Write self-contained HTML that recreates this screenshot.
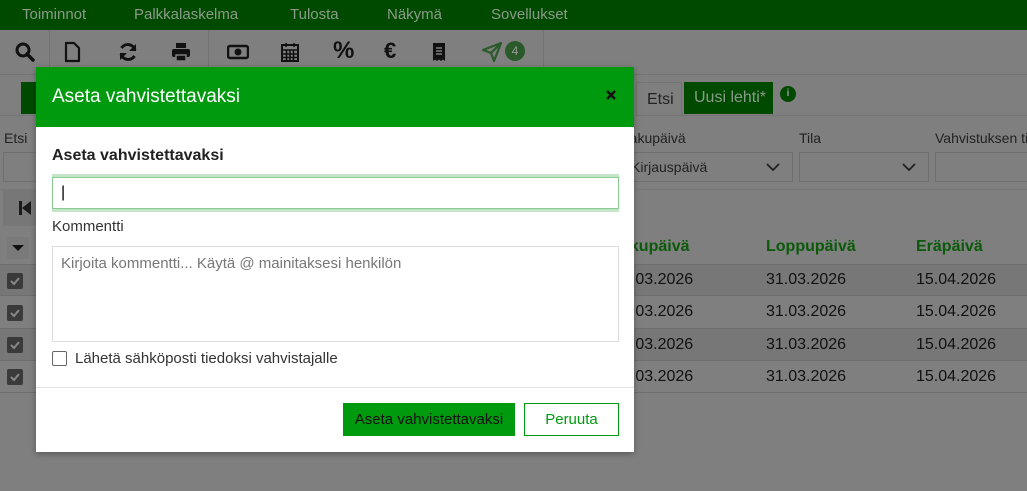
<!DOCTYPE html><html><head><style>
*{box-sizing:border-box;margin:0;padding:0}
body{width:1027px;height:491px;overflow:hidden;background:#7f7f7f;font-family:"Liberation Sans",sans-serif;position:relative;font-size:15px}
.a{position:absolute;white-space:nowrap}
.nav{left:0;top:0;width:1027px;height:30px;background:#004a00;color:#8a9a8a;font-size:15px}
.nav span{position:absolute;top:6px}
.tb{top:30px;left:0;width:1027px;height:45px;border-bottom:1px solid #737373}
svg.ic{position:absolute;top:41px;width:22px;height:22px}
.sep{position:absolute;top:30px;width:1px;height:45px;background:#737373}
.hd{color:#0a5a0a;font-weight:bold;font-size:16px;top:238px}
.row{left:0;width:1027px;height:32px;border-bottom:1px solid #6e6e6e}
.dt{font-size:16px;color:#111}
.cb{position:absolute;left:7px;width:16px;height:16px;background:#3a3a3a;border-radius:2px}
.sel{height:30px;border:1px solid #6f6f6f;top:152px}
</style></head><body>
<div class="a nav"><span style="left:22px">Toiminnot</span><span style="left:134px">Palkkalaskelma</span><span style="left:290px">Tulosta</span><span style="left:387px">Näkymä</span><span style="left:491px">Sovellukset</span></div>
<div class="a tb"></div>
<div class="sep" style="left:49px"></div><div class="sep" style="left:208px"></div><div class="sep" style="left:543px"></div>
<svg class="ic" style="left:14px" viewBox="0 0 22 22"><circle cx="9" cy="9" r="6" fill="none" stroke="#111" stroke-width="3"/><path d="M13 13l6 6" stroke="#111" stroke-width="3.5" stroke-linecap="round"/></svg>
<svg class="ic" style="left:61px" viewBox="0 0 22 22"><path d="M5 2h8l5 5v13H5z" fill="none" stroke="#111" stroke-width="2.2" stroke-linejoin="round"/></svg>
<svg class="ic" style="left:117px" viewBox="0 0 22 22"><path d="M18 9A7.5 7.5 0 0 0 4.5 7M4 13a7.5 7.5 0 0 0 13.5 2" fill="none" stroke="#111" stroke-width="3"/><path d="M19 3v7h-7zM3 19v-7h7z" fill="#111"/></svg>
<svg class="ic" style="left:170px" viewBox="0 0 22 22"><path d="M6 2h10v5H6z" fill="#111"/><rect x="2" y="8" width="18" height="8" rx="2" fill="#111"/><path d="M6 14h10v6H6z" fill="#111" stroke="#7f7f7f" stroke-width="1.5"/></svg>
<svg class="ic" style="left:227px" viewBox="0 0 22 22"><rect x="1" y="5" width="20" height="12" rx="2" fill="none" stroke="#111" stroke-width="2.5"/><circle cx="11" cy="11" r="3.5" fill="#111"/></svg>
<svg class="ic" style="left:279px" viewBox="0 0 22 22"><rect x="3" y="4" width="16" height="16" fill="none" stroke="#111" stroke-width="2"/><path d="M3 9h16M7 2v4M15 2v4M3 13h16M3 16.5h16M7.5 9v11M11 9v11M14.5 9v11" stroke="#111" stroke-width="1.6"/></svg>
<div class="a" style="left:333px;top:37px;font-size:24px;font-weight:bold;color:#111">%</div>
<div class="a" style="left:384px;top:38px;font-size:22px;font-weight:bold;color:#111">€</div>
<svg class="ic" style="left:428px" viewBox="0 0 22 22"><path d="M5 2h12v18l-2-1.5-2 1.5-2-1.5-2 1.5-2-1.5-2 1.5z" fill="#111"/><path d="M8 7h6M8 10h6M8 13h6" stroke="#7f7f7f" stroke-width="1.6"/></svg>
<svg class="ic" style="left:481px" viewBox="0 0 22 22"><path d="M20 2L2 9l8 3 3 8z M10 12L20 2" fill="none" stroke="#2a5a2a" stroke-width="2.2" stroke-linejoin="round"/></svg>
<div class="a" style="left:505px;top:41px;width:20px;height:20px;border-radius:10px;background:#2a5a2a;color:#9a9a9a;font-size:12px;text-align:center;line-height:20px">4</div>
<div class="a" style="left:21px;top:82px;width:30px;height:32px;background:#004a00"></div>
<div class="a" style="left:636px;top:82px;width:46px;height:33px;border:1px solid #737373;border-bottom:none;font-size:16px;color:#222;padding:8px 0 0 10px">Etsi</div>
<div class="a" style="left:684px;top:82px;width:89px;height:32px;background:#004a00;color:#8a9a8a;font-size:16px;padding:7px 0 0 10px">Uusi lehti*</div>
<div class="a" style="left:780px;top:86px;width:16px;height:16px;border-radius:8px;background:#004a00;color:#9a9a9a;font-size:10px;text-align:center;line-height:16px;font-weight:bold">i</div>
<div class="a" style="left:0;top:115px;width:1027px;height:1px;background:#737373"></div>
<div class="a" style="left:4px;top:130px;font-size:14px;color:#222">Etsi</div>
<div class="a" style="left:618px;top:130px;font-size:14px;color:#222">makupäivä</div>
<div class="a" style="left:799px;top:130px;font-size:14px;color:#222">Tila</div>
<div class="a" style="left:935px;top:130px;font-size:14px;color:#222">Vahvistuksen tila</div>
<div class="a sel" style="left:3px;width:40px"></div>
<div class="a sel" style="left:620px;width:173px;font-size:14px;color:#222;padding:6px 0 0 10px">Kirjauspäivä<svg style="position:absolute;right:12px;top:10px" width="14" height="9"><path d="M1 1l6 6 6-6" fill="none" stroke="#222" stroke-width="1.8"/></svg></div>
<div class="a sel" style="left:799px;width:130px"><svg style="position:absolute;right:12px;top:10px" width="14" height="9"><path d="M1 1l6 6 6-6" fill="none" stroke="#222" stroke-width="1.8"/></svg></div>
<div class="a sel" style="left:935px;width:100px"></div>
<div class="a" style="left:0;top:189px;width:1027px;height:1px;background:#777"></div>
<div class="a" style="left:3px;top:190px;width:35px;height:36px;background:#777"><svg style="position:absolute;left:15px;top:11px" width="14" height="14"><path d="M1 0h3v14H1zM13 0v14L4 7z" fill="#1a1a1a"/></svg></div>
<div class="a" style="left:7px;top:237px;width:22px;height:22px;background:#7a7a7a"><svg style="position:absolute;left:5px;top:8px" width="12" height="7"><path d="M0 0h12L6 6z" fill="#111"/></svg></div>
<div class="a hd" style="left:621px">akupäivä</div><div class="a hd" style="left:766px">Loppupäivä</div><div class="a hd" style="left:916px">Eräpäivä</div>
<div class="a row" style="top:264px;background:#777;border-top:1px solid #6e6e6e"></div>
<div class="a row" style="top:297px"></div>
<div class="a row" style="top:329px;background:#777"></div>
<div class="a row" style="top:361px"></div>
<svg class="cb" style="top:273px" viewBox="0 0 16 16"><path d="M4 8l3 3 5-6" fill="none" stroke="#888" stroke-width="2"/></svg>
<svg class="cb" style="top:305px" viewBox="0 0 16 16"><path d="M4 8l3 3 5-6" fill="none" stroke="#888" stroke-width="2"/></svg>
<svg class="cb" style="top:337px" viewBox="0 0 16 16"><path d="M4 8l3 3 5-6" fill="none" stroke="#888" stroke-width="2"/></svg>
<svg class="cb" style="top:369px" viewBox="0 0 16 16"><path d="M4 8l3 3 5-6" fill="none" stroke="#888" stroke-width="2"/></svg>
<div class="a dt" style="left:622px;top:271px">1.03.2026</div><div class="a dt" style="left:766px;top:271px">31.03.2026</div><div class="a dt" style="left:916px;top:271px">15.04.2026</div>
<div class="a dt" style="left:622px;top:303px">1.03.2026</div><div class="a dt" style="left:766px;top:303px">31.03.2026</div><div class="a dt" style="left:916px;top:303px">15.04.2026</div>
<div class="a dt" style="left:622px;top:336px">1.03.2026</div><div class="a dt" style="left:766px;top:336px">31.03.2026</div><div class="a dt" style="left:916px;top:336px">15.04.2026</div>
<div class="a dt" style="left:622px;top:368px">1.03.2026</div><div class="a dt" style="left:766px;top:368px">31.03.2026</div><div class="a dt" style="left:916px;top:368px">15.04.2026</div>

<div class="a" style="left:36px;top:67px;width:598px;height:385px;background:#fff;box-shadow:0 2px 6px rgba(0,0,0,.3)">
 <div class="a" style="left:0;top:0;width:598px;height:60px;background:#009a0e;color:#fff;font-size:19px;padding:19px 0 0 16px">Aseta vahvistettavaksi<svg style="position:absolute;right:18px;top:23px" width="10" height="10"><path d="M1 1l8 8M9 1l-8 8" stroke="#111" stroke-width="2.5"/></svg></div>
 <div class="a" style="left:16px;top:80px;font-weight:bold;font-size:16px;color:#222">Aseta vahvistettavaksi</div>
 <div class="a" style="left:16px;top:107px;width:567px;height:38px;background:#c3e6c8;padding:3px 0"><div style="height:32px;background:#fff;border:1px solid #88cc90;padding:6px 0 0 8px;font-size:16px">|</div></div>
 <div class="a" style="left:16px;top:151px;font-size:15px;color:#333">Kommentti</div>
 <div class="a" style="left:16px;top:179px;width:567px;height:96px;border:1px solid #ddd;padding:8px 0 0 8px;color:#777;font-size:15px">Kirjoita kommentti... Käytä @ mainitaksesi henkilön</div>
 <div class="a" style="left:16px;top:284px;width:15px;height:15px;border:1px solid #666;border-radius:2px"></div>
 <div class="a" style="left:39px;top:283px;font-size:15px;color:#333">Lähetä sähköposti tiedoksi vahvistajalle</div>
 <div class="a" style="left:0;top:320px;width:598px;height:1px;background:#e2e2e2"></div>
 <div class="a" style="left:307px;top:336px;width:172px;height:33px;background:#009a0e;color:#111;font-size:15px;text-align:center;line-height:33px">Aseta vahvistettavaksi</div>
 <div class="a" style="left:488px;top:336px;width:95px;height:33px;border:1px solid #009a0e;color:#009a0e;font-size:15px;text-align:center;line-height:31px">Peruuta</div>
</div>
</body></html>
